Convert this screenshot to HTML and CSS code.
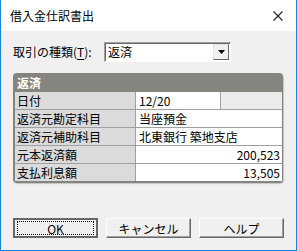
FILE: index.html
```html
<!DOCTYPE html>
<html lang="ja">
<head>
  <meta charset="UTF-8" />
  <title>借入金仕訳書出</title>
  <link rel="stylesheet" href="styles.css">
</head>
<body>
  <div class="window">
    <div class="titlebar">
      <span class="title">借入金仕訳書出</span>
      <svg class="close" width="10" height="10" viewBox="0 0 10 10">
        <path d="M0.5 0.5 L9.5 9.5 M9.5 0.5 L0.5 9.5" stroke="#222" stroke-width="1.1" fill="none"/>
      </svg>
    </div>

    <div class="content">
      <div class="type-row">
        <span class="type-label">取引の種類(<u>T</u>):</span>
        <div class="combo">
          <span class="combo-text">返済</span>
          <span class="combo-btn">
            <svg width="7" height="4" viewBox="0 0 7 4"><path d="M0 0 H7 L3.5 4 Z" fill="#000"/></svg>
          </span>
        </div>
      </div>

      <div class="panel">
        <div class="panel-head">返済</div>
        <div class="rows">
          <div class="row">
            <div class="cell-label">日付</div>
            <div class="cell-value split">
              <span class="date">12/20</span>
              <span class="blank"></span>
            </div>
          </div>
          <div class="row">
            <div class="cell-label">返済元勘定科目</div>
            <div class="cell-value">当座預金</div>
          </div>
          <div class="row">
            <div class="cell-label">返済元補助科目</div>
            <div class="cell-value">北東銀行 築地支店</div>
          </div>
          <div class="row">
            <div class="cell-label">元本返済額</div>
            <div class="cell-value num">200,523</div>
          </div>
          <div class="row">
            <div class="cell-label">支払利息額</div>
            <div class="cell-value num">13,505</div>
          </div>
        </div>
      </div>

      <div class="buttons">
        <button class="btn default"><span class="focus">OK</span></button>
        <button class="btn">キャンセル</button>
        <button class="btn">ヘルプ</button>
      </div>
    </div>
  </div>
</body>
</html>
```

FILE: styles.css
```css
body {
  margin: 0;
  font-family: "Noto Sans CJK JP", "Noto Sans", sans-serif;
  font-size: 12px;
  color: #000;
}

.window {
  width: 297px;
  height: 251px;
  box-sizing: border-box;
  border: 1px solid #1883d7;
  border-top: none;
  background: #f0f0f0;
}

.titlebar {
  height: 31px;
  background: #fff;
  display: flex;
  align-items: center;
  justify-content: space-between;
  padding: 0 13px 0 9px;
}

.title {
  font-size: 12px;
  color: #000;
}

.content {
  padding: 11px 12px 0 12px;
}

.type-row {
  display: flex;
  align-items: center;
  height: 20px;
}

.type-label {
  width: 91px;
  line-height: 20px;
}

.type-label u {
  text-underline-offset: 2px;
}

.combo {
  width: 127px;
  height: 20px;
  box-sizing: border-box;
  border: 1px solid #a0a0a0;
  border-right-color: #fff;
  border-bottom-color: #fff;
  box-shadow: inset 1px 1px 0 #696969;
  background: #fff;
  display: flex;
  align-items: center;
  justify-content: space-between;
  padding: 1px 1px 1px 3px;
}

.combo-text {
  line-height: 16px;
}

.combo-btn {
  width: 16px;
  height: 16px;
  box-sizing: border-box;
  background: #f0f0f0;
  border: 1px solid #e3e3e3;
  border-right-color: #696969;
  border-bottom-color: #696969;
  display: flex;
  align-items: center;
  justify-content: center;
}

.panel {
  margin-top: 11px;
  width: 270px;
  height: 110px;
  box-sizing: border-box;
  background: #85847e;
  border-radius: 4px;
  overflow: hidden;
  box-shadow: 1px 1px 1px #c4c4c4;
}

.panel-head {
  height: 19px;
  line-height: 19px;
  padding-left: 4px;
  color: #fff;
  font-weight: bold;
}

.rows {
  margin: 0 1px 0 2px;
  background: #a0a0a0;
  display: flex;
  flex-direction: column;
  gap: 1px;
}

.row {
  display: grid;
  grid-template-columns: 120px 1fr;
  column-gap: 1px;
  height: 17px;
}

.cell-label {
  background: #dcdbdb;
  padding-left: 2px;
  line-height: 17px;
  white-space: nowrap;
}

.cell-value {
  background: #fff;
  padding: 0 2px 0 3px;
  line-height: 17px;
  white-space: nowrap;
}

.cell-value.split {
  display: flex;
  padding: 0;
  background: #a0a0a0;
  gap: 1px;
}

.cell-value .date {
  width: 81px;
  padding-left: 3px;
  background: #fff;
}

.cell-value .blank {
  flex: 1;
  background: #ebebeb;
}

.cell-value.num {
  text-align: right;
}

.buttons {
  margin-top: 35px;
  width: 271px;
  display: flex;
  gap: 8px;
}

.btn {
  width: 85px;
  height: 20px;
  box-sizing: border-box;
  padding: 0;
  font-family: inherit;
  font-size: 12px;
  color: #000;
  background: #f0f0f0;
  border: 1px solid #fff;
  border-right-color: #696969;
  border-bottom-color: #696969;
  box-shadow: inset -1px -1px 0 #a0a0a0;
}

.btn.default {
  border: 2px solid #696969;
  box-shadow: none;
  display: flex;
  align-items: center;
  justify-content: center;
}

.btn .focus {
  width: 77px;
  height: 14px;
  line-height: 14px;
  box-sizing: border-box;
  border: 1px dotted #000;
  text-align: center;
}
```
